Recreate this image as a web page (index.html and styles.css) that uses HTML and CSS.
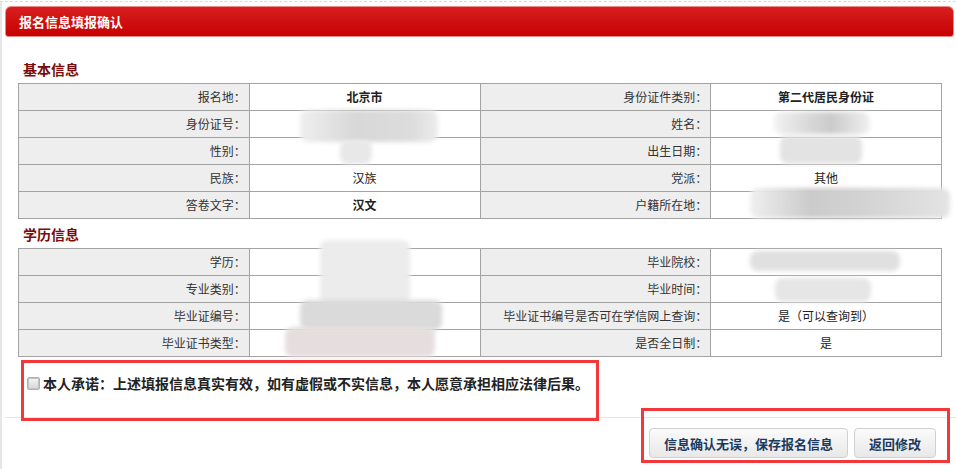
FILE: index.html
```html
<!DOCTYPE html>
<html lang="zh-CN">
<head>
    <meta charset="UTF-8">
    <meta name="viewport" content="width=device-width, initial-scale=1.0">
    <title>报名信息填报确认</title>
    <link rel="stylesheet" href="styles.css">
</head>
<body>
    <div class="page">
        <div class="panel-head">报名信息填报确认</div>

        <div class="content">
            <h3 class="section-title first">基本信息</h3>
            <table class="info">
                <tr>
                    <td class="label">报名地：</td>
                    <td class="value strong">北京市</td>
                    <td class="label">身份证件类别：</td>
                    <td class="value strong">第二代居民身份证</td>
                </tr>
                <tr>
                    <td class="label">身份证号：</td>
                    <td class="value"></td>
                    <td class="label">姓名：</td>
                    <td class="value"></td>
                </tr>
                <tr>
                    <td class="label">性别：</td>
                    <td class="value"></td>
                    <td class="label">出生日期：</td>
                    <td class="value"></td>
                </tr>
                <tr>
                    <td class="label">民族：</td>
                    <td class="value">汉族</td>
                    <td class="label">党派：</td>
                    <td class="value">其他</td>
                </tr>
                <tr>
                    <td class="label">答卷文字：</td>
                    <td class="value strong">汉文</td>
                    <td class="label">户籍所在地：</td>
                    <td class="value"></td>
                </tr>
            </table>

            <h3 class="section-title">学历信息</h3>
            <table class="info">
                <tr>
                    <td class="label">学历：</td>
                    <td class="value"></td>
                    <td class="label">毕业院校：</td>
                    <td class="value"></td>
                </tr>
                <tr>
                    <td class="label">专业类别：</td>
                    <td class="value"></td>
                    <td class="label">毕业时间：</td>
                    <td class="value"></td>
                </tr>
                <tr>
                    <td class="label">毕业证编号：</td>
                    <td class="value"></td>
                    <td class="label">毕业证书编号是否可在学信网上查询：</td>
                    <td class="value">是（可以查询到）</td>
                </tr>
                <tr>
                    <td class="label">毕业证书类型：</td>
                    <td class="value"></td>
                    <td class="label">是否全日制：</td>
                    <td class="value">是</td>
                </tr>
            </table>

            <div class="promise">
                <span class="check"></span>
                <span>本人承诺：上述填报信息真实有效，如有虚假或不实信息，本人愿意承担相应法律后果。</span>
            </div>
        </div>

        <div class="actions">
            <button class="btn">信息确认无误，保存报名信息</button>
            <button class="btn">返回修改</button>
        </div>

        <!-- blurred personal data -->
        <div class="mask mask-id"></div>
        <div class="mask mask-id-tail"></div>
        <div class="mask mask-name"></div>
        <div class="mask mask-birth"></div>
        <div class="mask mask-home"></div>
        <div class="mask mask-edu-top"></div>
        <div class="mask mask-edu-mid"></div>
        <div class="mask mask-edu-bottom"></div>
        <div class="mask mask-school"></div>
        <div class="mask mask-gradtime"></div>

        <!-- annotation frames -->
        <div class="mark mark-promise"></div>
        <div class="mark mark-actions"></div>
    </div>
</body>
</html>
```

FILE: styles.css
```css
* {
    box-sizing: border-box;
}

body {
    margin: 0;
    padding-top: 1px;
    background: #fff;
    color: #333;
    font-family: "Noto Sans CJK SC", "Liberation Sans", sans-serif;
    font-size: 12px;
}

.page {
    position: relative;
    min-height: 468px;
    border-top: 1px dashed #d8d8d8;
    border-left: 2px solid #e6e6e6;
}

.panel-head {
    height: 31px;
    margin: 4px 2px 0 3px;
    padding-left: 13px;
    border: 1px solid #e88a88;
    border-radius: 6px 6px 3px 3px;
    background: linear-gradient(#d61f1f, #c80000);
    color: #fff;
    font-size: 13px;
    font-weight: bold;
    line-height: 29px;
}

.content {
    padding: 22px 15px 0 16px;
}

.section-title {
    margin: 5px 0 3px;
    padding-left: 5px;
    color: #7a0c0c;
    font-size: 14px;
    line-height: 21px;
}

.section-title.first {
    margin-top: 0;
}

.info {
    width: 924px;
    table-layout: fixed;
    border-collapse: separate;
    border-spacing: 0;
    border-top: 1px solid #a3a3a3;
    border-left: 1px solid #a3a3a3;
}

.info td {
    height: 27px;
    padding: 0;
    border-right: 1px solid #a3a3a3;
    border-bottom: 1px solid #a3a3a3;
    line-height: 26px;
    white-space: nowrap;
}

/* JP face centres the full-width colon, like the original */
.label {
    padding-right: 3px !important;
    background: #eee;
    font-family: "Noto Sans CJK JP", "Noto Sans CJK SC", sans-serif;
    text-align: right;
}

.value {
    background: #fff;
    color: #222;
    text-align: center;
}

.strong {
    font-weight: bold;
}

.promise {
    display: flex;
    align-items: center;
    height: 60px;
    padding: 0 0 8px 9px;
    color: #222;
    font-size: 14px;
    font-weight: bold;
}

.check {
    width: 13px;
    height: 13px;
    margin-right: 3px;
    border: 1px solid #93b6e4;
    border-radius: 2px;
    background: linear-gradient(#f5f5f5, #d6d6d6);
    box-shadow: inset 0 0 0 1px #c4c4c4;
}

.actions {
    display: flex;
    justify-content: flex-end;
    gap: 6px;
    margin-left: 3px;
    padding: 10px 20px 0 0;
    border-top: 1px solid #e6e6e6;
}

.btn {
    height: 30px;
    padding: 0 14px;
    border: 1px solid #d0d0d0;
    border-radius: 4px;
    background: linear-gradient(#fbfbfb, #e8e8e8);
    color: #1c3a5e;
    font-family: inherit;
    font-size: 13px;
    font-weight: bold;
    cursor: pointer;
}

.btn:hover {
    filter: brightness(1.04);
}

/* blurred data */
.mask {
    position: absolute;
    border-radius: 8px;
    filter: blur(2px);
}

.mask-id { left: 298px; top: 108px; width: 138px; height: 32px; background: linear-gradient(90deg, #efefef, #d8d8d8 40%, #dcdcdc 80%, #ececec); }
.mask-id-tail { left: 338px; top: 138px; width: 32px; height: 24px; background: #e8e8e8; }
.mask-name { left: 772px; top: 110px; width: 96px; height: 22px; background: linear-gradient(90deg, #f2f2f2, #d6d6d6 40%, #cbcbcb 60%, #f0f0f0); }
.mask-birth { left: 778px; top: 134px; width: 82px; height: 28px; background: #e3e3e3; }
.mask-home { left: 748px; top: 186px; width: 200px; height: 30px; background: linear-gradient(90deg, #f0f0f0, #cbcbcb 30%, #d4d4d4 60%, #e4e4e4); }
.mask-edu-top { left: 318px; top: 238px; width: 90px; height: 64px; background: #ececec; }
.mask-edu-mid { left: 298px; top: 298px; width: 142px; height: 30px; background: #dadada; }
.mask-edu-bottom { left: 283px; top: 325px; width: 150px; height: 30px; background: #e6dede; }
.mask-school { left: 748px; top: 249px; width: 150px; height: 20px; background: #e0e0e0; }
.mask-gradtime { left: 773px; top: 276px; width: 96px; height: 24px; background: #e6e6e6; }

/* annotation frames */
.mark {
    position: absolute;
    border: 3px solid #f2383b;
}

.mark-promise {
    left: 19px;
    top: 358px;
    width: 578px;
    height: 61px;
}

.mark-actions {
    left: 639px;
    top: 406px;
    width: 309px;
    height: 55px;
}
```
